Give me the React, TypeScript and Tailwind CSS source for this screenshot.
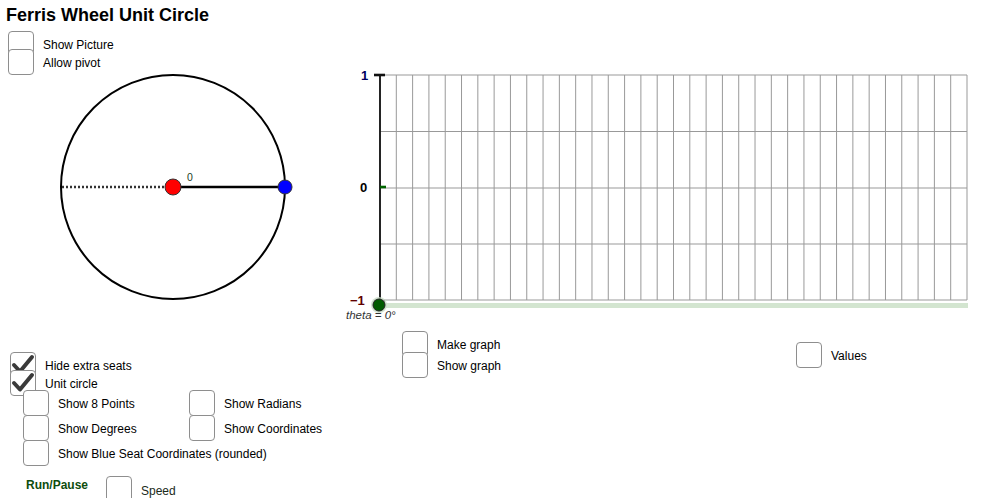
import React from 'react';

// GeoGebra-style checkbox square
function Box({ checked }: { checked?: boolean }) {
  return (
    <div className="shrink-0 w-[26px] h-[26px] rounded-[4px] border-[1.5px] border-[#8e8e8e] bg-white flex items-center justify-center">
      {checked && (
        <svg width="24" height="22" viewBox="0 0 24 22">
          <path d="M3 11 L9 17.5 L21 3" fill="none" stroke="#3a3a3a" strokeWidth="4" strokeLinecap="round" strokeLinejoin="round" />
        </svg>
      )}
    </div>
  );
}

type RowProps = { label: string; checked?: boolean; h: string; className?: string };

function Check({ label, checked, h, className = '' }: RowProps) {
  return (
    <div className={`flex items-center gap-[9px] ${h}`}>
      <Box checked={checked} />
      <span className={`pt-[2px] text-[12px] leading-none whitespace-nowrap ${className}`}>{label}</span>
    </div>
  );
}

const cols = Array.from({ length: 37 }, (_, i) => 380 + (i * 587) / 36);
const rows = [75, 131.5, 188, 244, 300];

export default function App() {
  return (
    <div className="relative w-[1002px] h-[498px] overflow-hidden bg-white text-black font-['Liberation_Sans',Arial,sans-serif]">
      <h1 className="absolute left-[6px] top-[4px] text-[18px] font-bold leading-tight">Ferris Wheel Unit Circle</h1>

      {/* applet drawing: wheel and graph */}
      <svg className="absolute left-0 top-0" width="1002" height="498">
        <circle cx="173" cy="187" r="112" fill="none" stroke="#000" strokeWidth="2" />
        <line x1="62" y1="187" x2="166" y2="187" stroke="#333" strokeWidth="2.4" strokeDasharray="2 2" />
        <line x1="173" y1="187" x2="285" y2="187" stroke="#000" strokeWidth="2.6" />
        <circle cx="173" cy="187" r="8" fill="#ff0000" stroke="#333" strokeWidth="1" />
        <circle cx="285" cy="187" r="7" fill="#0000ff" stroke="#333" strokeWidth="1" />
        <text x="187" y="181" fontSize="10.5" fill="#1c3c1c">0</text>

        {cols.map((x, i) => (
          <line key={`c${i}`} x1={x} y1="75" x2={x} y2="300" stroke="#999" strokeWidth="1" />
        ))}
        {rows.map((y, i) => (
          <line key={`r${i}`} x1="380" y1={y} x2="967" y2={y} stroke="#999" strokeWidth="1" />
        ))}
        <line x1="380" y1="74" x2="380" y2="302" stroke="#111" strokeWidth="1.8" />
        <line x1="374" y1="75" x2="385" y2="75" stroke="#111" strokeWidth="2.6" />
        <line x1="380" y1="187" x2="386" y2="187" stroke="#006400" strokeWidth="2.6" />
        <line x1="374" y1="301" x2="385" y2="301" stroke="#111" strokeWidth="2.2" />
        <rect x="380" y="303" width="588" height="5" fill="#d3e5d0" />
        <circle cx="379" cy="305" r="8" fill="#c8dcc6" opacity="0.8" />
        <circle cx="379" cy="305" r="6" fill="#005a00" stroke="#222" strokeWidth="1" />

        <text x="361" y="80" fontSize="13" fontWeight="bold" fill="#000060">1</text>
        <text x="360" y="192" fontSize="13" fontWeight="bold" fill="#000">0</text>
        <text x="350" y="305" fontSize="13" fontWeight="bold" fill="#600000">−1</text>
        <text x="346" y="319" fontSize="11.5" fontStyle="italic" fill="#333">theta = 0°</text>
      </svg>

      {/* controls, placed on the applet canvas */}
      <div className="absolute left-[8px] top-[35px] flex flex-col">
        <Check h="h-[18px]" label="Show Picture" />
        <Check h="h-[18px]" label="Allow pivot" />
      </div>

      <div className="absolute left-[10px] top-[356px] flex flex-col">
        <Check h="h-[18px]" label="Hide extra seats" checked />
        <Check h="h-[18px]" label="Unit circle" checked />
      </div>

      <div className="absolute left-[23px] top-[390px] grid grid-cols-[166px_auto] auto-rows-[25px]">
        <Check h="h-[25px]" label="Show 8 Points" />
        <Check h="h-[25px]" label="Show Radians" />
        <Check h="h-[25px]" label="Show Degrees" />
        <Check h="h-[25px]" label="Show Coordinates" />
        <Check h="h-[25px]" label="Show Blue Seat Coordinates (rounded)" />
      </div>

      <div className="absolute left-[26px] top-[476px] flex items-start">
        <span className="mt-[3px] w-[80px] text-[12px] leading-none font-bold text-[#0d4d0d]">Run/Pause</span>
        <div className="flex items-center gap-[9px]">
          <Box />
          <span className="pt-[4px] text-[12px] leading-none text-[#1a2a1a]">Speed</span>
        </div>
      </div>

      <div className="absolute left-[402px] top-[333px] flex flex-col">
        <Check h="h-[21px]" label="Make graph" />
        <Check h="h-[21px]" label="Show graph" />
      </div>

      <div className="absolute left-[796px] top-[342px]">
        <Check h="h-[26px]" label="Values" />
      </div>
    </div>
  );
}
